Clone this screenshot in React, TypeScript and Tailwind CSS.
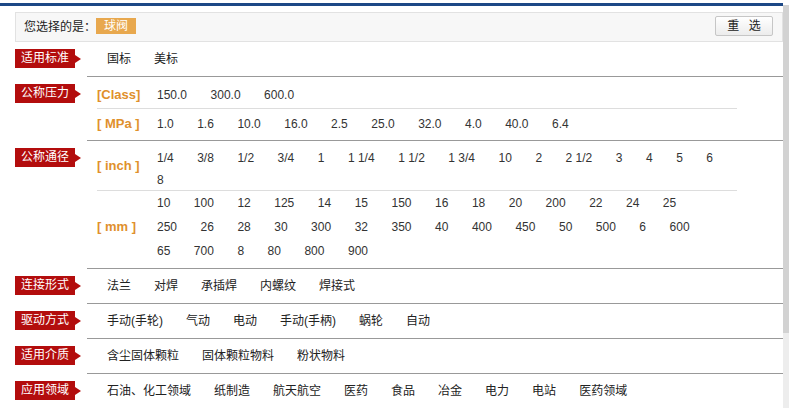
import React from "react";

const font = "font-['Liberation_Sans','Noto_Sans_CJK_SC',sans-serif]";

function Tag({ text }: { text: string }) {
  return (
    <div className="w-[72px] shrink-0">
      <div className="flex items-center mt-[7px]">
        <div className="w-[60px] h-[19px] bg-[#b30d0d] text-white text-[12px] leading-[19px] text-center">
          {text}
        </div>
        <div className="w-0 h-0 border-y-[4px] border-y-transparent border-l-[6px] border-l-[#b30d0d]" />
      </div>
    </div>
  );
}

function Values({ items, lh }: { items: string[]; lh: string }) {
  return (
    <div className={`flex-1 flex flex-wrap text-[12px] text-[#333] ${lh}`}>
      {items.map((v, i) => (
        <span key={i} className="mr-[23.5px] whitespace-pre">
          {v}
        </span>
      ))}
    </div>
  );
}

function SimpleRow({ label, items }: { label: string; items: string[] }) {
  return (
    <div className="flex">
      <Tag text={label} />
      <div className="flex-1 h-[35px] border-b border-[#999] flex items-center pl-[20px] text-[12px] text-[#222]">
        {items.map((v) => (
          <span key={v} className="mr-[23px]">
            {v}
          </span>
        ))}
      </div>
    </div>
  );
}

const subLabel = "w-[60px] shrink-0 font-bold text-[13px] text-[#e0902c] leading-[24px] whitespace-pre";

export default function App() {
  return (
    <div className={`w-[789px] h-[408px] overflow-hidden bg-white flex ${font}`}>
      <div className="w-[783px] shrink-0">
        <div className="mt-[3px] h-[3px] bg-[#1c4886]" />

        <div className="mt-[6px] ml-[15px] h-[30px] border border-[#e2e2e2] bg-[#f7f7f7] flex items-center pl-[8px] pr-[9px]">
          <span className="text-[12px] text-[#222]">您选择的是：</span>
          <span className="h-[16px] px-[8px] bg-[#e8a84e] text-white text-[12px] leading-[16px] -mt-[2px]">球阀</span>
          <div className="flex-1" />
          <button className="w-[58px] h-[20px] border border-[#c6c6c6] rounded-[2px] bg-gradient-to-b from-white to-[#ececec] text-[12px] text-[#222] leading-[18px] [word-spacing:6px] -mt-[2px]">
            重 选
          </button>
        </div>

        <div className="ml-[15px]">
          <SimpleRow label="适用标准" items={["国标", "美标"]} />

          <div className="flex">
            <Tag text="公称压力" />
            <div className="flex-1 border-b border-[#999]">
              <div className="ml-[10px] w-[640px] h-[32px] border-b border-[#ddd] flex items-start pt-[6px]">
                <div className={subLabel}>[Class]</div>
                <Values items={["150.0", "300.0", "600.0"]} lh="leading-[24px]" />
              </div>
              <div className="ml-[10px] w-[640px] h-[31px] flex items-start pt-[3px]">
                <div className={subLabel}>{"[ MPa ]"}</div>
                <Values
                  items={["1.0", "1.6", "10.0", "16.0", "2.5", "25.0", "32.0", "4.0", "40.0", "6.4"]}
                  lh="leading-[24px]"
                />
              </div>
            </div>
          </div>

          <div className="flex">
            <Tag text="公称通径" />
            <div className="flex-1 border-b border-[#999]">
              <div className="ml-[10px] w-[640px] h-[50px] border-b border-[#ddd] flex items-start pt-[6px]">
                <div className={`${subLabel} self-center -mt-[6px]`}>{"[ inch ]"}</div>
                <Values
                  items={["1/4", "3/8", "1/2", "3/4", "1", "1 1/4", "1 1/2", "1 3/4", "10", "2", "2 1/2", "3", "4", "5", "6", "8"]}
                  lh="leading-[22px]"
                />
              </div>
              <div className="ml-[10px] w-[640px] h-[77px] flex items-start">
                <div className={`${subLabel} self-center -mt-[5px]`}>{"[ mm ]"}</div>
                <Values
                  items={[
                    "10", "100", "12", "125", "14", "15", "150", "16", "18", "20", "200", "22", "24", "25",
                    "250", "26", "28", "30", "300", "32", "350", "40", "400", "450", "50", "500", "6", "600",
                    "65", "700", "8", "80", "800", "900",
                  ]}
                  lh="leading-[24px]"
                />
              </div>
            </div>
          </div>

          <SimpleRow label="连接形式" items={["法兰", "对焊", "承插焊", "内螺纹", "焊接式"]} />
          <SimpleRow label="驱动方式" items={["手动(手轮)", "气动", "电动", "手动(手柄)", "蜗轮", "自动"]} />
          <SimpleRow label="适用介质" items={["含尘固体颗粒", "固体颗粒物料", "粉状物料"]} />
          <SimpleRow
            label="应用领域"
            items={["石油、化工领域", "纸制造", "航天航空", "医药", "食品", "冶金", "电力", "电站", "医药领域"]}
          />
        </div>
      </div>

      {/* page scrollbar */}
      <div className="w-[6px] shrink-0 pt-[5px] flex flex-col">
        <div className="h-[328px] bg-[#d2d2d2]" />
        <div className="flex-1 bg-[#ededed]" />
      </div>
    </div>
  );
}
